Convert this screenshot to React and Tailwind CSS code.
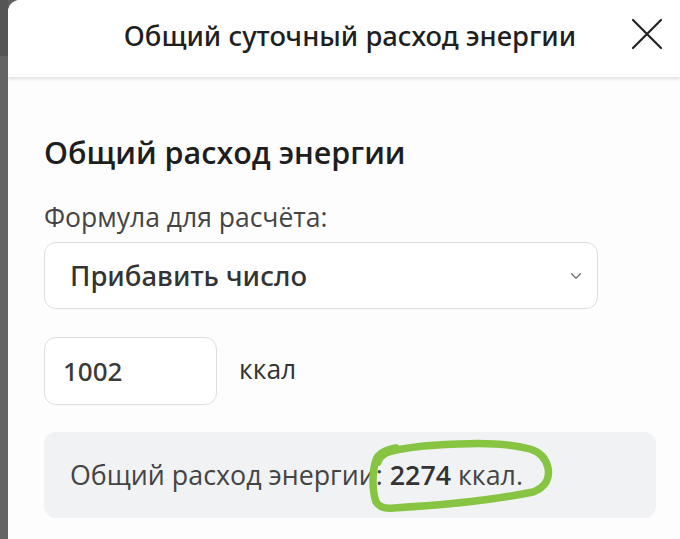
import { ChevronDown } from "lucide-react";

const font = { fontFamily: '"Open Sans", "Noto Sans", sans-serif' };
const mediumFont = { fontFamily: '"Noto Sans", "Open Sans", sans-serif' };

function CloseIcon() {
  return (
    <svg width="32" height="32" viewBox="0 0 32 32" fill="none" stroke="#222" strokeWidth="2.2" strokeLinecap="round">
      <path d="M2 2 L30 30 M30 2 L2 30" />
    </svg>
  );
}

// hand drawn green marker ring around the total
function MarkerRing() {
  return (
    <svg
      className="absolute left-[324px] top-[6px] pointer-events-none"
      width="190"
      height="78"
      viewBox="0 0 190 78"
      fill="none"
    >
      <path
        d="M28 10 C18 12 10 16 8 22 C4 34 4 52 8 64 C12 70 18 71 26 70 C60 68 120 63 165 54 C178 49 182 40 180 30 C178 20 172 14 162 11 C140 5 110 5 90 6 C60 7 35 9 18 15 C13 18 11 20 10 24"
        stroke="#86c441"
        strokeWidth="7.5"
        strokeLinecap="round"
        strokeLinejoin="round"
      />
    </svg>
  );
}

export default function App() {
  return (
    <div className="w-[680px] h-[539px] flex overflow-hidden bg-[#5f5f5f]" style={font}>
      <div className="w-[8px] flex flex-col flex-shrink-0">
        <div className="h-[56px] bg-[#555555]" />
        <div className="flex-1 bg-[#646464]" />
      </div>
      <div className="flex-1 flex flex-col bg-[#fdfdfd] rounded-tl-[12px] overflow-hidden">
        <div className="h-[77px] flex-shrink-0 flex items-center bg-white shadow-[0_2px_4px_rgba(0,0,0,0.12)] z-10">
          <div
            className="flex-1 text-center text-[27.4px] leading-[36px] font-medium text-[#1f1f1f] pl-[84px] -mt-[6px]"
            style={mediumFont}
          >
            Общий суточный расход энергии
          </div>
          <div className="w-[72px] flex justify-start pl-[23px] -mt-[10px]">
            <CloseIcon />
          </div>
        </div>
        <div className="flex-1 pl-[36px] pt-[55px]">
          <h2 className="text-[30.5px] leading-[40px] font-semibold text-[#1e1e1e]">Общий расход энергии</h2>
          <div className="mt-[28px] text-[26.5px] leading-[34px] text-[#444]">Формула для расчёта:</div>
          <div className="mt-[8px] w-[554px] h-[67px] border border-[#dedede] rounded-[12px] bg-white flex items-center justify-between pl-[25px] pr-[12px]">
            <span className="text-[27.5px] font-medium text-[#333]" style={mediumFont}>Прибавить число</span>
            <ChevronDown className="w-[18px] h-[18px] text-[#666]" strokeWidth={1.5} />
          </div>
          <div className="mt-[28px] flex items-center gap-[22px]">
            <div
              className="w-[173px] h-[68px] border border-[#dedede] rounded-[12px] bg-white flex items-center pl-[18px] text-[26px] font-medium text-[#3a3a3a]"
              style={mediumFont}
            >
              1002
            </div>
            <span className="text-[26.5px] text-[#333] -mt-[2px]">ккал</span>
          </div>
          <div className="mt-[27px] w-[612px] h-[86px] rounded-[12px] bg-[#f1f2f4] flex items-center pl-[26px] relative">
            <span className="text-[26.8px] text-[#444]">
              Общий расход энергии: <b className="font-semibold text-[#333]">2274</b> ккал.
            </span>
            <MarkerRing />
          </div>
        </div>
      </div>
    </div>
  );
}
